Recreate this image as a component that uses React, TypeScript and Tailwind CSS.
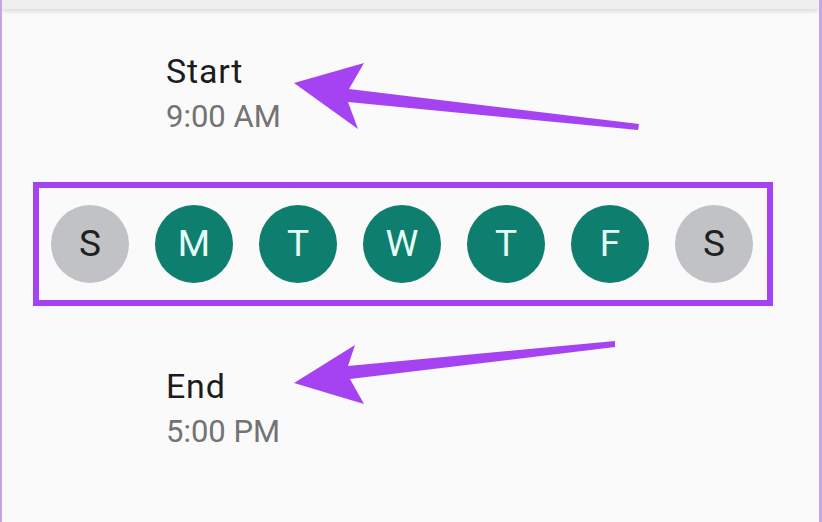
import React from "react";

const days = [
  { l: "S", on: false },
  { l: "M", on: true },
  { l: "T", on: true },
  { l: "W", on: true },
  { l: "T", on: true },
  { l: "F", on: true },
  { l: "S", on: false },
];

const purple = "#a543f2";

export default function App() {
  return (
    <div
      className="relative w-[822px] h-[522px] overflow-hidden bg-[#fafafa] border-l-2 border-r-[3px] border-l-[#c9a3ea] border-r-[#c9a3ea]"
      style={{ fontFamily: "Roboto, 'Noto Sans', sans-serif" }}
    >
      <div className="h-[9px] bg-[#efefef] shadow-[0_2px_5px_rgba(0,0,0,0.14)]" />

      <div className="pl-[164px] mt-[42px]">
        <div className="text-[34px] leading-[40px] text-[#1c1c1c] tracking-[0.8px]">Start</div>
        <div className="mt-[8px] text-[31px] leading-[36px] text-[#737373]">9:00 AM</div>
      </div>

      <div className="ml-[31px] mt-[47px] w-[740px] h-[124px] border-[6px] border-[#a543f2] flex items-center pl-[12px] gap-[26px]">
        {days.map((d, i) => (
          <div
            key={i}
            className={
              d.on
                ? "w-[78px] h-[78px] rounded-full bg-[#0e7f6f] flex items-center justify-center text-[37px] text-[#e6fff8]"
                : "w-[78px] h-[78px] rounded-full bg-[#c1c2c5] flex items-center justify-center text-[37px] text-[#202020]"
            }
          >
            {d.l}
          </div>
        ))}
      </div>

      <div className="pl-[164px] mt-[60px]">
        <div className="text-[34px] leading-[40px] text-[#1c1c1c] tracking-[0.8px]">End</div>
        <div className="mt-[8px] text-[31px] leading-[36px] text-[#737373]">5:00 PM</div>
      </div>

      <svg
        className="absolute left-0 top-0 pointer-events-none"
        width="822"
        height="522"
        viewBox="0 0 822 522"
      >
        <path
          d="M292 83 L362 63 L347 89 L637 124 L636 130 L346 102 L356 129 Z"
          fill={purple}
        />
        <path
          d="M292 383 L353 345 L346 366 L613 341 L613 347 L348 379 L362 404 Z"
          fill={purple}
        />
      </svg>
    </div>
  );
}
